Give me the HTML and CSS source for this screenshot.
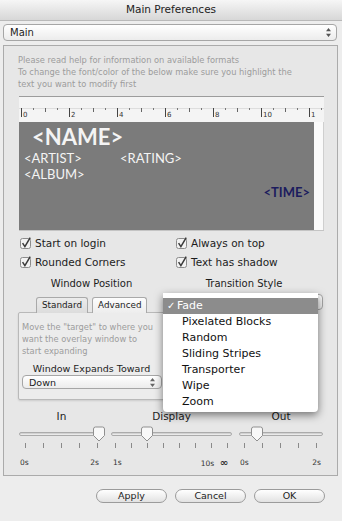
FILE: index.html
```html
<!DOCTYPE html>
<html lang="en">
<head>
  <meta charset="UTF-8" />
  <title>Main Preferences</title>
  <link rel="stylesheet" href="styles.css">
</head>
<body>
  <div class="window">
    <div class="titlebar">Main Preferences</div>

    <div class="popup main-popup">
      <span>Main</span>
      <svg class="arrows" width="5" height="9" viewBox="0 0 5 9"><path d="M2.5 0 L5 3.2 H0Z M0 5.8 H5 L2.5 9Z" fill="#555"/></svg>
    </div>

    <div class="group">
      <p class="help">Please read help for information on available formats<br>To change the font/color of the below make sure you highlight the<br>text you want to modify first</p>

      <div class="preview">
        <svg class="ruler" width="305" height="26" viewBox="0 0 305 26">
          <defs>
            <pattern id="ticks" x="2" y="0" width="48" height="26" patternUnits="userSpaceOnUse">
              <rect x="0" y="12" width="1" height="9" fill="#444"/>
              <rect x="12" y="12" width="1" height="2" fill="#777"/>
              <rect x="24" y="12" width="1" height="4" fill="#666"/>
              <rect x="36" y="12" width="1" height="2" fill="#777"/>
            </pattern>
          </defs>
          <rect x="0" y="0" width="305" height="26" fill="#f4f4f4"/>
          <rect x="0" y="0" width="305" height="1" fill="#9c9c9c"/>
          <rect x="0" y="12" width="305" height="1" fill="#dedede"/>
          <rect x="0" y="0" width="305" height="26" fill="url(#ticks)"/>
          <g class="ruler-num">
            <text x="4" y="21">0</text>
            <text x="52" y="21">2</text>
            <text x="100" y="21">4</text>
            <text x="148" y="21">6</text>
            <text x="196" y="21">8</text>
            <text x="244" y="21">10</text>
            <text x="292" y="21">1</text>
          </g>
        </svg>
        <div class="canvas-row">
          <div class="canvas">
            <div class="t-name">&lt;NAME&gt;</div>
            <div class="t-row"><span class="t-artist">&lt;ARTIST&gt;</span><span>&lt;RATING&gt;</span></div>
            <div class="t-row">&lt;ALBUM&gt;</div>
            <div class="t-time">&lt;TIME&gt;</div>
          </div>
          <div class="scroll-strip"></div>
        </div>
      </div>

      <div class="checks">
        <label class="check"><svg class="cb" width="13" height="12" viewBox="0 0 13 12"><rect x="0.5" y="1.5" width="10" height="10" rx="2" fill="#f2f2f2" stroke="#8c8c8c"/><path d="M2.6 6.2 L4.9 9.6 L10.2 0.6" fill="none" stroke="#3a3a3a" stroke-width="1.5"/></svg>Start on login</label>
        <label class="check"><svg class="cb" width="13" height="12" viewBox="0 0 13 12"><rect x="0.5" y="1.5" width="10" height="10" rx="2" fill="#f2f2f2" stroke="#8c8c8c"/><path d="M2.6 6.2 L4.9 9.6 L10.2 0.6" fill="none" stroke="#3a3a3a" stroke-width="1.5"/></svg>Always on top</label>
        <label class="check"><svg class="cb" width="13" height="12" viewBox="0 0 13 12"><rect x="0.5" y="1.5" width="10" height="10" rx="2" fill="#f2f2f2" stroke="#8c8c8c"/><path d="M2.6 6.2 L4.9 9.6 L10.2 0.6" fill="none" stroke="#3a3a3a" stroke-width="1.5"/></svg>Rounded Corners</label>
        <label class="check"><svg class="cb" width="13" height="12" viewBox="0 0 13 12"><rect x="0.5" y="1.5" width="10" height="10" rx="2" fill="#f2f2f2" stroke="#8c8c8c"/><path d="M2.6 6.2 L4.9 9.6 L10.2 0.6" fill="none" stroke="#3a3a3a" stroke-width="1.5"/></svg>Text has shadow</label>
      </div>

      <div class="options">
        <div class="col-left">
          <div class="col-title">Window Position</div>
          <div class="tabs">
            <span class="tab">Standard</span>
            <span class="tab active">Advanced</span>
          </div>
          <div class="tab-panel">
            <p class="panel-help">Move the "target" to where you<br>want the overlay window to<br>start expanding</p>
            <div class="panel-label">Window Expands Toward</div>
            <div class="popup small-popup">
              <span>Down</span>
              <svg class="arrows" width="5" height="9" viewBox="0 0 5 9"><path d="M2.5 0 L5 3.2 H0Z M0 5.8 H5 L2.5 9Z" fill="#666"/></svg>
            </div>
          </div>
        </div>
        <div class="col-right">
          <div class="col-title">Transition Style</div>
          <div class="popup trans-popup"></div>
        </div>

        <ul class="menu">
          <li class="selected"><span class="tick">✓</span>Fade</li>
          <li>Pixelated Blocks</li>
          <li>Random</li>
          <li>Sliding Stripes</li>
          <li>Transporter</li>
          <li>Wipe</li>
          <li>Zoom</li>
        </ul>
      </div>

      <div class="sliders">
        <div class="slider slider-in">
          <div class="slider-label">In</div>
          <div class="track"><svg class="knob" style="left: 72px" width="14" height="16" viewBox="0 0 14 16"><path d="M1.5 3 Q1.5 1 3.5 1 H10.5 Q12.5 1 12.5 3 V9.5 L7 15 L1.5 9.5 Z" fill="#f8f8f8" stroke="#8f8f8f"/></svg></div>
          <div class="ticks"><i></i><i></i><i></i><i></i><i></i></div>
          <div class="scale"><span>0s</span><span>2s</span></div>
        </div>
        <div class="slider slider-display">
          <div class="slider-label">Display</div>
          <div class="track"><svg class="knob" style="left: 28px" width="14" height="16" viewBox="0 0 14 16"><path d="M1.5 3 Q1.5 1 3.5 1 H10.5 Q12.5 1 12.5 3 V9.5 L7 15 L1.5 9.5 Z" fill="#f8f8f8" stroke="#8f8f8f"/></svg></div>
          <div class="ticks"><i></i><i></i><i></i><i></i><i></i><i></i><i></i><i></i></div>
          <div class="scale"><span>1s</span><span>10s <b class="inf">∞</b></span></div>
        </div>
        <div class="slider slider-out">
          <div class="slider-label">Out</div>
          <div class="track"><svg class="knob" style="left: 10px" width="14" height="16" viewBox="0 0 14 16"><path d="M1.5 3 Q1.5 1 3.5 1 H10.5 Q12.5 1 12.5 3 V9.5 L7 15 L1.5 9.5 Z" fill="#f8f8f8" stroke="#8f8f8f"/></svg></div>
          <div class="ticks"><i></i><i></i><i></i><i></i><i></i></div>
          <div class="scale"><span>0s</span><span>2s</span></div>
        </div>
      </div>
    </div>

    <div class="buttons">
      <button>Apply</button>
      <button>Cancel</button>
      <button>OK</button>
    </div>
  </div>
</body>
</html>
```

FILE: styles.css
```css
* {
  box-sizing: border-box;
}

body {
  margin: 0;
  font-family: "DejaVu Sans", "Lucida Grande", sans-serif;
  color: #1c1c1c;
  background: #ededed;
}

.window {
  width: 342px;
  height: 521px;
  display: flex;
  flex-direction: column;
  background: #ededed;
  overflow: hidden;
}

.titlebar {
  height: 21px;
  padding-top: 3px;
  text-align: center;
  font-size: 10.5px;
  line-height: 13px;
  color: #222;
  background: linear-gradient(#f6f6f6, #d7d7d7);
  border-bottom: 1px solid #b9b9b9;
}

.popup {
  display: flex;
  align-items: center;
  justify-content: space-between;
  border: 1px solid #a6a6a6;
  border-radius: 4px;
  background: linear-gradient(#ffffff, #ececec);
}

.main-popup {
  margin: 3px 5px 0 3px;
  height: 17px;
  padding: 0 5px 0 6px;
  font-size: 10px;
}

.arrows {
  display: block;
}

.group {
  margin: 4px 4px 0 3px;
  height: 431px;
  border: 1px solid #ababab;
  background: #e7e7e7;
  padding: 8px 12px 0 15px;
}

.help {
  margin: 0 0 6px -1px;
  font-size: 8.3px;
  line-height: 12px;
  color: #9c9c9c;
  white-space: nowrap;
}

.preview {
  width: 305px;
  border-bottom: 1px solid #c4c4c4;
}

.ruler {
  display: block;
}

.ruler-num {
  font-family: "DejaVu Sans", sans-serif;
  font-size: 7px;
  fill: #333;
}

.canvas-row {
  display: flex;
  height: 108px;
}

.canvas {
  width: 295px;
  background: #7b7b7b;
  padding: 2px 4px 0 5px;
  font-family: Lato, "Open Sans", sans-serif;
  color: #f4f4f4;
}

.t-name {
  margin-left: 8px;
  font-size: 22px;
  font-weight: 700;
  line-height: 26px;
}

.t-row {
  font-size: 13px;
  line-height: 16px;
}

.t-artist {
  display: inline-block;
  width: 96px;
}

.t-time {
  margin-top: 2px;
  text-align: right;
  font-size: 13px;
  font-weight: 700;
  line-height: 16px;
  color: #1c1c5e;
}

.scroll-strip {
  flex: 1;
  background: #fafafa;
  border-right: 1px solid #cfcfcf;
}

.checks {
  display: grid;
  grid-template-columns: 156px 1fr;
  row-gap: 1px;
  margin-top: 3px;
}

.check {
  display: flex;
  align-items: center;
  gap: 2px;
  height: 18px;
  padding-left: 1px;
  font-size: 10.5px;
}

.cb {
  flex: none;
}

.options {
  position: relative;
  display: flex;
  margin-top: 6px;
}

.col-title {
  font-size: 10px;
  line-height: 13px;
  text-align: center;
}

.col-left {
  width: 147px;
  margin-left: -1px;
}

.col-right {
  width: 158px;
}

.tabs {
  display: flex;
  gap: 4px;
  margin-top: 7px;
  padding-left: 18px;
  height: 16px;
}

.tab {
  position: relative;
  z-index: 1;
  height: 16px;
  padding: 0 5px;
  font-size: 8.8px;
  line-height: 15px;
  border: 1px solid #a9a9a9;
  border-bottom: none;
  border-radius: 3px 3px 0 0;
  background: linear-gradient(#ececec, #dcdcdc);
}

.tab.active {
  background: linear-gradient(#fdfdfd, #ededed);
}

.tab-panel {
  margin-top: -1px;
  height: 88px;
  border: 1px solid #b9b9b9;
  border-radius: 2px;
  background: #ececec;
  padding: 8px 3px 0 3px;
  box-shadow: 0 1px 2px rgba(0, 0, 0, 0.12);
}

.panel-help {
  margin: 0;
  font-size: 8.3px;
  line-height: 12px;
  color: #9c9c9c;
  white-space: nowrap;
}

.panel-label {
  margin-top: 6px;
  font-size: 9.5px;
  line-height: 12px;
  text-align: center;
}

.small-popup {
  height: 14px;
  width: 140px;
  padding: 0 6px 0 6px;
  font-size: 9.5px;
}

.trans-popup {
  margin-top: 4px;
  height: 16px;
}

.menu {
  position: absolute;
  left: 144px;
  top: 16px;
  width: 155px;
  margin: 0;
  padding: 5px 0 2px;
  list-style: none;
  background: #fff;
  border-radius: 0 0 4px 4px;
  box-shadow: 0 3px 9px rgba(0, 0, 0, 0.5);
  font-size: 11px;
}

.menu li {
  height: 16px;
  line-height: 16px;
  padding-left: 19px;
  color: #111;
}

.menu li.selected {
  padding-left: 4px;
  background: #8c8c8c;
  color: #fff;
}

.tick {
  display: inline-block;
  width: 10px;
  font-size: 10px;
}

.sliders {
  display: flex;
  gap: 7px;
  margin-top: 10px;
}

.slider-in {
  width: 85px;
}

.slider-display {
  width: 121px;
}

.slider-out {
  width: 84px;
}

.slider-label {
  font-size: 10.5px;
  line-height: 12px;
  text-align: center;
}

.track {
  position: relative;
  height: 4px;
  margin-top: 10px;
  border: 1px solid #ababab;
  border-radius: 2px;
  background: linear-gradient(#c6c6c6, #f6f6f6);
}

.knob {
  position: absolute;
  top: -7px;
}

.ticks {
  display: flex;
  justify-content: space-between;
  height: 5px;
  margin-top: 7px;
}

.ticks i {
  width: 1px;
  height: 5px;
  background: #8a8a8a;
}

.slider-in .ticks {
  padding: 0 6px;
}

.slider-display .ticks {
  padding: 0 4px;
}

.slider-out .ticks {
  padding: 0 6px 0 5px;
}

.scale {
  display: flex;
  justify-content: space-between;
  margin-top: 10px;
  font-size: 7.5px;
  line-height: 9px;
  color: #333;
}

.slider-in .scale {
  padding: 0 5px 0 1px;
}

.slider-display .scale {
  padding: 0 4px 0 2px;
}

.slider-out .scale {
  padding: 0 2px 0 1px;
}

.inf {
  font-size: 10px;
  margin-left: 3px;
}

.buttons {
  display: flex;
  justify-content: flex-end;
  gap: 8px;
  margin-top: 13px;
  padding-right: 17px;
}

button {
  width: 71px;
  height: 14px;
  padding: 0;
  border: 1px solid #9b9b9b;
  border-radius: 7px;
  background: linear-gradient(#ffffff, #e2e2e2);
  font-family: "DejaVu Sans", "Lucida Grande", sans-serif;
  font-size: 9.5px;
  line-height: 12px;
  color: #1c1c1c;
}
```
